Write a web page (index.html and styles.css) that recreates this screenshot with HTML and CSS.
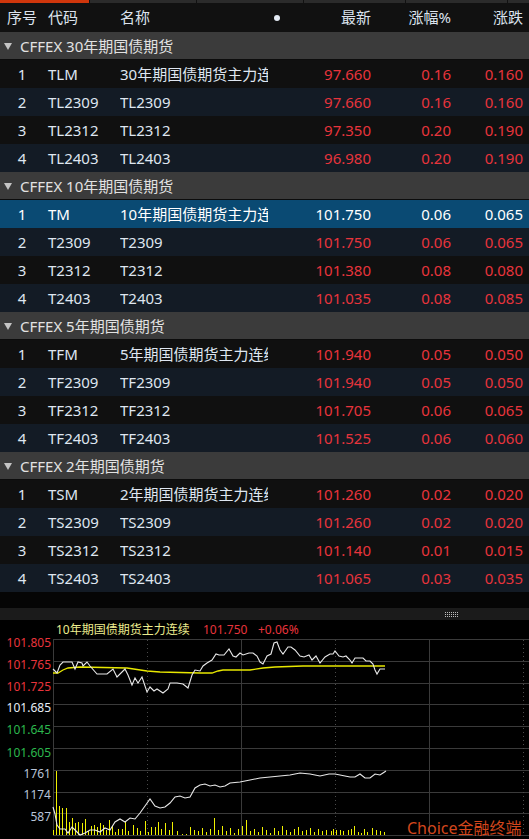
FILE: index.html
```html
<!DOCTYPE html>
<html lang="zh-CN">
<head>
<meta charset="utf-8">
<title>国债期货</title>
<link rel="stylesheet" href="styles.css">
</head>
<body>
<div class="app">
  <div class="tabstrip">
    <span class="tab tab-active"></span>
    <span class="tab tab-w1"></span>
    <span class="tab tab-w1"></span>
    <span class="tab tab-w2"></span>
    <span class="tab tab-w2"></span>
    <span class="tab tab-rest"></span>
  </div>
  <div class="row head">
    <span class="c-no">序号</span>
    <span class="c-code">代码</span>
    <span class="c-name">名称</span>
    <span class="c-dot"><i class="dot"></i></span>
    <span class="c-num">最新</span>
    <span class="c-num">涨幅%</span>
    <span class="c-num">涨跌</span>
  </div>

  <div class="group"><i class="tri"></i>CFFEX 30年期国债期货</div>
  <div class="row odd"><span class="c-no">1</span><span class="c-code">TLM</span><span class="c-name">30年期国债期货主力连续</span><span class="c-dot"></span><span class="c-num up">97.660</span><span class="c-num up">0.16</span><span class="c-num up">0.160</span></div>
  <div class="row even"><span class="c-no">2</span><span class="c-code">TL2309</span><span class="c-name">TL2309</span><span class="c-dot"></span><span class="c-num up">97.660</span><span class="c-num up">0.16</span><span class="c-num up">0.160</span></div>
  <div class="row odd"><span class="c-no">3</span><span class="c-code">TL2312</span><span class="c-name">TL2312</span><span class="c-dot"></span><span class="c-num up">97.350</span><span class="c-num up">0.20</span><span class="c-num up">0.190</span></div>
  <div class="row even"><span class="c-no">4</span><span class="c-code">TL2403</span><span class="c-name">TL2403</span><span class="c-dot"></span><span class="c-num up">96.980</span><span class="c-num up">0.20</span><span class="c-num up">0.190</span></div>

  <div class="group"><i class="tri"></i>CFFEX 10年期国债期货</div>
  <div class="row selected"><span class="c-no">1</span><span class="c-code">TM</span><span class="c-name">10年期国债期货主力连续</span><span class="c-dot"></span><span class="c-num">101.750</span><span class="c-num">0.06</span><span class="c-num">0.065</span></div>
  <div class="row even"><span class="c-no">2</span><span class="c-code">T2309</span><span class="c-name">T2309</span><span class="c-dot"></span><span class="c-num up">101.750</span><span class="c-num up">0.06</span><span class="c-num up">0.065</span></div>
  <div class="row odd"><span class="c-no">3</span><span class="c-code">T2312</span><span class="c-name">T2312</span><span class="c-dot"></span><span class="c-num up">101.380</span><span class="c-num up">0.08</span><span class="c-num up">0.080</span></div>
  <div class="row even"><span class="c-no">4</span><span class="c-code">T2403</span><span class="c-name">T2403</span><span class="c-dot"></span><span class="c-num up">101.035</span><span class="c-num up">0.08</span><span class="c-num up">0.085</span></div>

  <div class="group"><i class="tri"></i>CFFEX 5年期国债期货</div>
  <div class="row odd"><span class="c-no">1</span><span class="c-code">TFM</span><span class="c-name">5年期国债期货主力连续</span><span class="c-dot"></span><span class="c-num up">101.940</span><span class="c-num up">0.05</span><span class="c-num up">0.050</span></div>
  <div class="row even"><span class="c-no">2</span><span class="c-code">TF2309</span><span class="c-name">TF2309</span><span class="c-dot"></span><span class="c-num up">101.940</span><span class="c-num up">0.05</span><span class="c-num up">0.050</span></div>
  <div class="row odd"><span class="c-no">3</span><span class="c-code">TF2312</span><span class="c-name">TF2312</span><span class="c-dot"></span><span class="c-num up">101.705</span><span class="c-num up">0.06</span><span class="c-num up">0.065</span></div>
  <div class="row even"><span class="c-no">4</span><span class="c-code">TF2403</span><span class="c-name">TF2403</span><span class="c-dot"></span><span class="c-num up">101.525</span><span class="c-num up">0.06</span><span class="c-num up">0.060</span></div>

  <div class="group"><i class="tri"></i>CFFEX 2年期国债期货</div>
  <div class="row odd"><span class="c-no">1</span><span class="c-code">TSM</span><span class="c-name">2年期国债期货主力连续</span><span class="c-dot"></span><span class="c-num up">101.260</span><span class="c-num up">0.02</span><span class="c-num up">0.020</span></div>
  <div class="row even"><span class="c-no">2</span><span class="c-code">TS2309</span><span class="c-name">TS2309</span><span class="c-dot"></span><span class="c-num up">101.260</span><span class="c-num up">0.02</span><span class="c-num up">0.020</span></div>
  <div class="row odd"><span class="c-no">3</span><span class="c-code">TS2312</span><span class="c-name">TS2312</span><span class="c-dot"></span><span class="c-num up">101.140</span><span class="c-num up">0.01</span><span class="c-num up">0.015</span></div>
  <div class="row even"><span class="c-no">4</span><span class="c-code">TS2403</span><span class="c-name">TS2403</span><span class="c-dot"></span><span class="c-num up">101.065</span><span class="c-num up">0.03</span><span class="c-num up">0.035</span></div>

  <div class="filler"></div>
  <div class="splitter">
    <svg class="grip" width="14" height="5" viewBox="0 0 14 5">
      <g fill="#bdbdbd">
        <rect x="0" y="0" width="1" height="1"/><rect x="2" y="0" width="1" height="1"/><rect x="4" y="0" width="1" height="1"/><rect x="6" y="0" width="1" height="1"/><rect x="8" y="0" width="1" height="1"/><rect x="10" y="0" width="1" height="1"/><rect x="12" y="0" width="1" height="1"/>
        <rect x="0" y="2" width="1" height="1"/><rect x="2" y="2" width="1" height="1"/><rect x="4" y="2" width="1" height="1"/><rect x="6" y="2" width="1" height="1"/><rect x="8" y="2" width="1" height="1"/><rect x="10" y="2" width="1" height="1"/><rect x="12" y="2" width="1" height="1"/>
        <rect x="0" y="4" width="1" height="1"/><rect x="2" y="4" width="1" height="1"/><rect x="4" y="4" width="1" height="1"/><rect x="6" y="4" width="1" height="1"/><rect x="8" y="4" width="1" height="1"/><rect x="10" y="4" width="1" height="1"/><rect x="12" y="4" width="1" height="1"/>
      </g>
    </svg>
  </div>

  <div class="chart">
    <svg class="chart-svg" width="529" height="219" viewBox="0 620 529 219">
      <g class="title">
        <text x="56" y="634" fill="#ecec8e">10年期国债期货主力连续</text>
        <text x="203" y="634" fill="#e8343c">101.750</text>
        <text x="258" y="634" fill="#e8343c">+0.06%</text>
      </g>
      <g stroke="#3a3a3a" stroke-width="1" fill="none" shape-rendering="crispEdges">
        <line x1="53" y1="639.5" x2="529" y2="639.5"/>
        <line x1="53" y1="661.5" x2="529" y2="661.5"/>
        <line x1="53" y1="683.5" x2="529" y2="683.5"/>
        <line x1="53" y1="704.5" x2="529" y2="704.5"/>
        <line x1="53" y1="726.5" x2="529" y2="726.5"/>
        <line x1="53" y1="748.5" x2="529" y2="748.5"/>
        <line x1="53" y1="770.5" x2="529" y2="770.5"/>
        <line x1="53" y1="792.5" x2="529" y2="792.5"/>
        <line x1="53" y1="813.5" x2="529" y2="813.5"/>
        <line x1="53" y1="835.5" x2="529" y2="835.5"/>
        <line x1="53.5" y1="639" x2="53.5" y2="836"/>
        <line x1="241.5" y1="639" x2="241.5" y2="836"/>
        <line x1="429.5" y1="639" x2="429.5" y2="836"/>
      </g>
      <g stroke="#4a4a4a" stroke-width="1" stroke-dasharray="1 3" fill="none" shape-rendering="crispEdges">
        <line x1="147.5" y1="640" x2="147.5" y2="835"/>
        <line x1="335.5" y1="640" x2="335.5" y2="835"/>
        <line x1="523.5" y1="640" x2="523.5" y2="835"/>
      </g>
      <g class="axis" text-anchor="end">
        <text x="51" y="647" fill="#e8343c">101.805</text>
        <text x="51" y="669" fill="#e8343c">101.765</text>
        <text x="51" y="691" fill="#e8343c">101.725</text>
        <text x="51" y="712" fill="#e6ecf5">101.685</text>
        <text x="51" y="734" fill="#2cb84e">101.645</text>
        <text x="51" y="757" fill="#2cb84e">101.605</text>
        <text x="51" y="778" fill="#b8c4d8">1761</text>
        <text x="51" y="799" fill="#b8c4d8">1174</text>
        <text x="51" y="821" fill="#b8c4d8">587</text>
      </g>
      <polyline fill="none" stroke="#e8e800" stroke-width="1.3" points="53,673 58,673 63,670 68,668 80,667 127,668 147,671 160,672 200,673 212,673 218,671 223,670 250,670 263,668 275,667 303,666 385,666"/>
      <polyline fill="none" stroke="#e8e8e8" stroke-width="1.1" points="53,669 57,673 60,665 63,662 72,662 75,669 78,662 82,663 83,666 87,662 90,666 97,674 107,674 113,669 117,677 125,669 128,675 132,685 135,678 138,683 142,677 147,692 150,687 154,691 157,689 163,693 168,689 170,683 177,683 183,684 188,688 192,675 195,670 200,671 203,666 207,663 212,660 216,654 219,655 224,655 229,649 233,656 236,657 240,653 243,655 249,653 253,653 257,656 260,662 263,664 267,656 271,654 274,643 277,642 280,650 283,654 288,647 291,647 295,650 300,656 304,657 309,655 312,660 316,656 320,663 325,657 330,654 333,654 335,651 339,656 343,657 346,656 350,660 352,663 355,658 358,658 363,658 366,661 370,661 373,664 375,670 377,674 380,669 385,669"/>
      <g fill="#f0f000" shape-rendering="crispEdges">
        <rect x="53" y="830" width="1" height="5"/><rect x="56" y="771" width="1" height="64"/><rect x="59" y="806" width="1" height="29"/><rect x="62" y="808" width="1" height="27"/><rect x="66" y="808" width="1" height="27"/><rect x="69" y="822" width="1" height="13"/><rect x="72" y="818" width="1" height="17"/><rect x="75" y="823" width="1" height="12"/><rect x="78" y="822" width="1" height="13"/><rect x="82" y="823" width="1" height="12"/><rect x="85" y="819" width="1" height="16"/><rect x="88" y="831" width="1" height="4"/><rect x="91" y="826" width="1" height="9"/><rect x="94" y="825" width="1" height="10"/><rect x="97" y="827" width="1" height="8"/><rect x="100" y="823" width="1" height="12"/><rect x="103" y="825" width="1" height="10"/><rect x="106" y="830" width="1" height="5"/><rect x="109" y="820" width="1" height="15"/><rect x="112" y="826" width="1" height="9"/><rect x="115" y="832" width="1" height="3"/><rect x="118" y="829" width="1" height="6"/><rect x="122" y="829" width="1" height="6"/><rect x="125" y="822" width="1" height="13"/><rect x="128" y="831" width="1" height="4"/><rect x="133" y="825" width="1" height="10"/><rect x="137" y="828" width="1" height="7"/><rect x="140" y="831" width="1" height="4"/><rect x="145" y="821" width="1" height="14"/><rect x="148" y="832" width="1" height="3"/><rect x="151" y="827" width="1" height="8"/><rect x="155" y="827" width="1" height="8"/><rect x="158" y="822" width="1" height="13"/><rect x="161" y="829" width="1" height="6"/><rect x="165" y="823" width="1" height="12"/><rect x="169" y="830" width="1" height="5"/><rect x="172" y="822" width="1" height="13"/><rect x="177" y="831" width="1" height="4"/><rect x="182" y="834" width="1" height="1"/><rect x="186" y="834" width="1" height="1"/><rect x="190" y="827" width="1" height="8"/><rect x="194" y="830" width="1" height="5"/><rect x="198" y="831" width="1" height="4"/><rect x="202" y="828" width="1" height="7"/><rect x="206" y="832" width="1" height="3"/><rect x="210" y="829" width="1" height="6"/><rect x="214" y="818" width="1" height="17"/><rect x="218" y="830" width="1" height="5"/><rect x="222" y="826" width="1" height="9"/><rect x="226" y="831" width="1" height="4"/><rect x="230" y="828" width="1" height="7"/><rect x="234" y="833" width="1" height="2"/><rect x="238" y="829" width="1" height="6"/><rect x="242" y="826" width="1" height="9"/><rect x="246" y="820" width="1" height="15"/><rect x="250" y="831" width="1" height="4"/><rect x="254" y="829" width="1" height="6"/><rect x="258" y="832" width="1" height="3"/><rect x="262" y="827" width="1" height="8"/><rect x="266" y="830" width="1" height="5"/><rect x="270" y="833" width="1" height="2"/><rect x="274" y="828" width="1" height="7"/><rect x="278" y="831" width="1" height="4"/><rect x="282" y="826" width="1" height="9"/><rect x="286" y="830" width="1" height="5"/><rect x="290" y="832" width="1" height="3"/><rect x="294" y="829" width="1" height="6"/><rect x="298" y="827" width="1" height="8"/><rect x="302" y="831" width="1" height="4"/><rect x="306" y="830" width="1" height="5"/><rect x="310" y="828" width="1" height="7"/><rect x="314" y="832" width="1" height="3"/><rect x="318" y="829" width="1" height="6"/><rect x="322" y="831" width="1" height="4"/><rect x="326" y="830" width="1" height="5"/><rect x="331" y="831" width="1" height="4"/><rect x="333" y="829" width="1" height="6"/><rect x="336" y="830" width="1" height="5"/><rect x="340" y="830" width="1" height="5"/><rect x="343" y="831" width="1" height="4"/><rect x="348" y="830" width="1" height="5"/><rect x="351" y="829" width="1" height="6"/><rect x="354" y="826" width="1" height="9"/><rect x="358" y="832" width="1" height="3"/><rect x="361" y="833" width="1" height="2"/><rect x="364" y="829" width="1" height="6"/><rect x="367" y="832" width="1" height="3"/><rect x="372" y="828" width="1" height="7"/><rect x="376" y="830" width="1" height="5"/><rect x="380" y="831" width="1" height="4"/><rect x="384" y="832" width="1" height="3"/>
      </g>
      <polyline fill="none" stroke="#e8e8e8" stroke-width="1.1" points="53,807 55,814 57,825 60,829 65,829 68,833 72,827 75,830 80,835 85,833 90,830 95,830 100,832 105,828 110,830 115,822 120,819 125,822 130,818 135,819 140,813 145,806 150,799 155,806 160,808 165,807 170,803 175,797 180,796 185,798 190,797 195,788 200,785 205,784 210,786 215,785 220,787 225,786 230,783 240,782 250,780 260,778 270,777 280,776 290,775 300,773 310,774 320,776 329,774 335,774 345,776 350,777 355,777 360,774 365,778 370,778 375,774 380,775 383,773 386,771"/>
      <text class="brand" x="407" y="834" fill="#d2461c">Choice金融终端</text>
    </svg>
  </div>
</div>
</body>
</html>
```

FILE: styles.css
```css
* { box-sizing: border-box; margin: 0; padding: 0; }
html, body { background: #000; }
body {
  width: 529px;
  height: 839px;
  overflow: hidden;
  font-family: "Noto Sans", "Noto Sans CJK SC", sans-serif;
  font-size: 15px;
  color: #dfe6f0;
}
.app { display: flex; flex-direction: column; width: 529px; height: 839px; }

.tabstrip { display: flex; height: 3px; background: #101010; }
.tab { height: 3px; background: #2b2b2b; border-right: 1px solid #111; }
.tab-active { width: 90px; background: #cf360c; }
.tab-w1 { width: 107px; }
.tab-w2 { width: 102px; }
.tab-rest { flex: 1; border-right: 0; }

.row {
  display: grid;
  grid-template-columns: 41px 72px 148px 32px 71px 80px 72px;
  align-items: center;
  height: 28px;
  padding: 0 6px 0 7px;
  line-height: 28px;
  white-space: nowrap;
}
.head { height: 29px; line-height: 29px; background: #111; color: #dce3ee; }
.odd { background: #101010; }
.even { background: #131b25; }
.selected { background: #0a4a73; color: #fff; }

.c-no { text-align: center; padding-right: 11px; }
.c-name { overflow: hidden; }
.c-num { text-align: right; }
.c-dot { display: flex; justify-content: center; align-items: center; }
.dot { display: block; width: 6px; height: 6px; border-radius: 50%; background: #e4ebf5; margin-left: -14px; }
.up { color: #e8343c; }

.group {
  display: flex;
  align-items: center;
  height: 28px;
  background: #3b3b3b;
  border-bottom: 1px solid #0c0c0c;
  color: #e2e2e2;
  padding-left: 4px;
  gap: 8px;
}
.tri {
  display: block;
  width: 0; height: 0;
  border-left: 4.5px solid transparent;
  border-right: 4.5px solid transparent;
  border-top: 7px solid #c4c4c4;
  margin-top: 1px;
}

.filler { height: 16px; background: #050505; }
.splitter {
  display: flex;
  align-items: center;
  justify-content: flex-end;
  height: 12px;
  background: #1b1b1b;
  padding-right: 70px;
}
.grip { display: block; }

.chart { position: relative; flex: 1; background: #000; }
.chart-svg { display: block; }
.chart-svg text { font-family: "Noto Sans", "Noto Sans CJK SC", sans-serif; font-size: 12px; }
.chart-svg .brand { font-size: 16px; }
```
